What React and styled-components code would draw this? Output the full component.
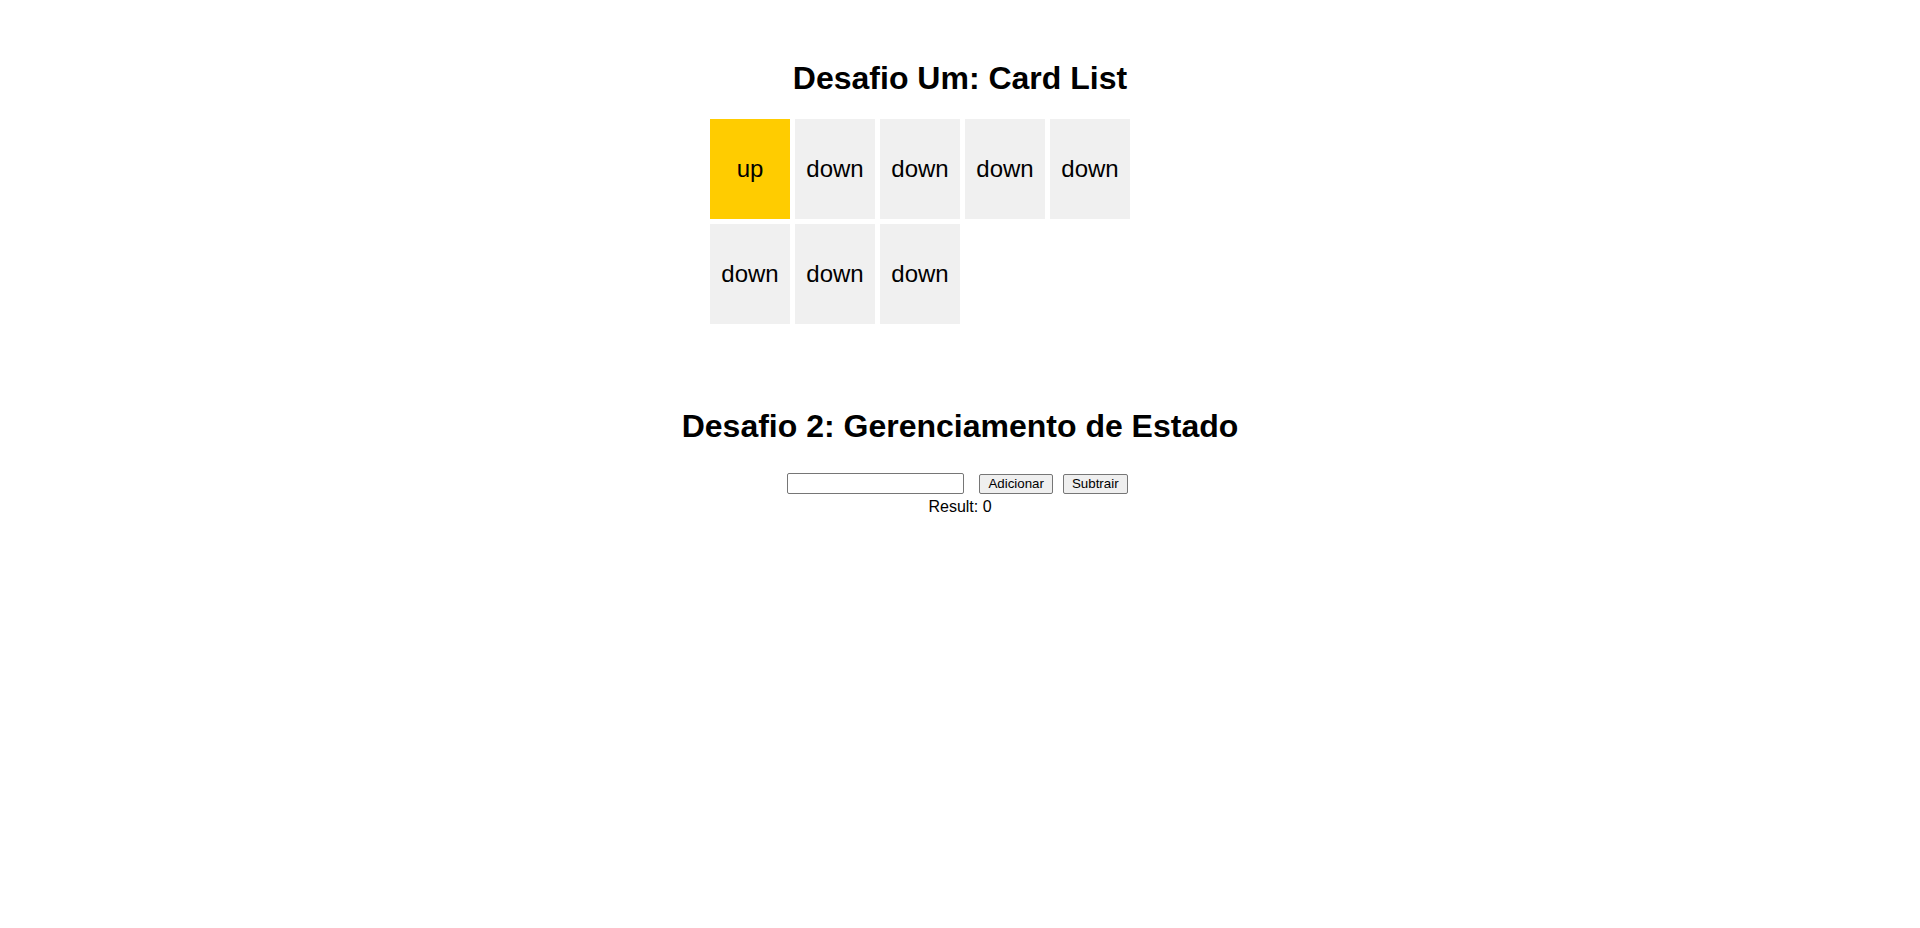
import React, { useState } from 'react';
import styled, { createGlobalStyle } from 'styled-components';

const GlobalStyle = createGlobalStyle`
  body {
    margin: 0;
    background: #ffffff;
    color: #000000;
    font-family: 'Liberation Sans', Arial, sans-serif;
    font-size: 16px;
  }
`;

const cards = ['up', 'down', 'down', 'down', 'down', 'down', 'down', 'down'];

export default function App() {
  const [value, setValue] = useState('');
  const [result, setResult] = useState(0);

  const add = () => setResult((r) => r + (Number(value) || 0));
  const subtract = () => setResult((r) => r - (Number(value) || 0));

  return (
    <PageStyled>
      <GlobalStyle />
      <SectionStyled>
        <TitleStyled>Desafio Um: Card List</TitleStyled>
        <CardListStyled>
          {cards.map((label, index) => (
            <CardStyled key={index} active={label === 'up'}>
              {label}
            </CardStyled>
          ))}
        </CardListStyled>
      </SectionStyled>

      <CounterSectionStyled>
        <TitleStyled>Desafio 2: Gerenciamento de Estado</TitleStyled>
        <ControlsStyled>
          <InputStyled type="text" value={value} onChange={(e) => setValue(e.target.value)} />
          <ButtonStyled onClick={add}>Adicionar</ButtonStyled>
          <ButtonStyled onClick={subtract}>Subtrair</ButtonStyled>
        </ControlsStyled>
        <ResultStyled>Result: {result}</ResultStyled>
      </CounterSectionStyled>
    </PageStyled>
  );
}

const PageStyled = styled.main`
  display: flex;
  flex-direction: column;
  align-items: center;
  padding-top: 60px;
  text-align: center;
`;

const SectionStyled = styled.section`
  display: flex;
  flex-direction: column;
  align-items: center;
  width: 100%;
`;

const CounterSectionStyled = styled(SectionStyled)`
  margin-top: 84px;
`;

const TitleStyled = styled.h1`
  margin: 0;
  font-size: 32px;
  font-weight: bold;
  line-height: 37px;
`;

const CardListStyled = styled.div`
  display: flex;
  flex-wrap: wrap;
  gap: 5px;
  width: 500px;
  margin-top: 22px;
`;

const CardStyled = styled.div`
  display: flex;
  align-items: center;
  justify-content: center;
  width: 80px;
  height: 100px;
  background-color: ${(props) => (props.active ? '#ffcc00' : '#f0f0f0')};
  color: #000000;
  font-size: 24px;
`;

const ControlsStyled = styled.div`
  display: flex;
  align-items: center;
  margin-top: 28px;
  padding-right: 5px;
`;

const InputStyled = styled.input`
  box-sizing: border-box;
  width: 177px;
  height: 21px;
  margin: 0 15px 0 0;
  padding: 1px 2px;
  border: 1px solid #767676;
  border-radius: 2px;
  background: #ffffff;
  font-family: 'Liberation Sans', Arial, sans-serif;
  font-size: 13.333px;
`;

const ButtonStyled = styled.button`
  box-sizing: border-box;
  height: 20px;
  margin: 0;
  padding: 1px 8px;
  border: 1px solid #767676;
  border-radius: 2px;
  background: #efefef;
  color: #000000;
  font-family: 'Liberation Sans', Arial, sans-serif;
  font-size: 13.333px;
  line-height: 16px;

  & + & {
    margin-left: 10px;
  }
`;

const ResultStyled = styled.div`
  margin-top: 4px;
  line-height: 18px;
`;
